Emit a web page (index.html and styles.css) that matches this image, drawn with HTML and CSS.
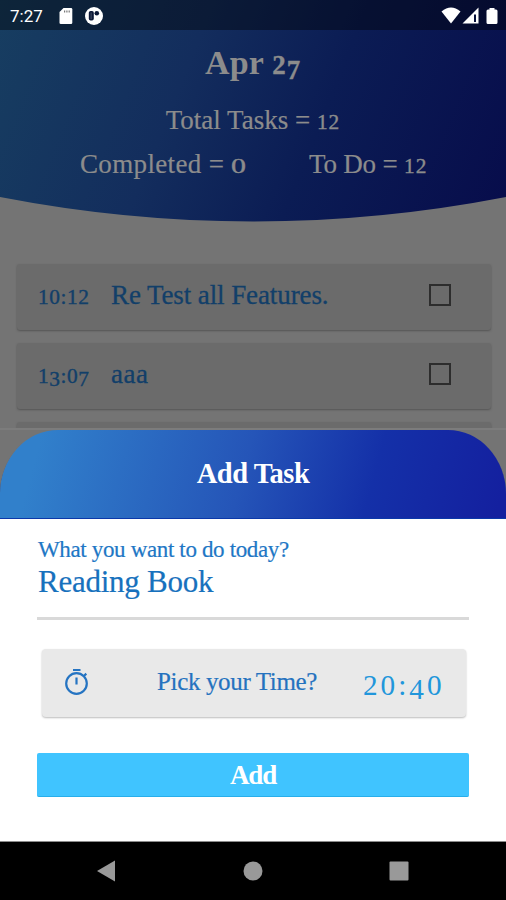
FILE: index.html
```html
<!DOCTYPE html>
<html lang="en">
<head>
<meta charset="utf-8">
<title>Add Task</title>
<link rel="stylesheet" href="styles.css">
</head>
<body>
<main class="screen">
  <section class="page">
    <header class="summary">
      <div class="status">
        <span class="clock">7:27</span>
        <svg class="sd" width="14" height="18" viewBox="0 0 14 18"><path d="M4.500 1H12a1.300 1.300 0 0 1 1.300 1.300v13.400A1.300 1.300 0 0 1 12 17H1.800A1.300 1.300 0 0 1 .5 15.700V5z" fill="#fff"/><path d="M5 3.400h1.200v2H5zM7.300 3.400h1.200v2H7.300zM9.600 3.400h1.200v2H9.600z" fill="#777"/></svg>
        <svg class="badge" width="18" height="18" viewBox="0 0 18 18"><circle cx="9" cy="9" r="9" fill="#fff"/><rect x="3.800" y="4" width="5" height="9.600" rx="1.800" fill="#0b1837"/><rect x="5.500" y="5.500" width="1.300" height="6.600" fill="#37435c"/><circle cx="11.800" cy="6.300" r="2.300" fill="#0b1837"/></svg>
        <span class="fill"></span>
        <svg width="20" height="17" viewBox="0 0 20 17"><path d="M.5 4.500Q10-3.600 19.500 4.500L10 16.500z" fill="#fff"/></svg>
        <svg class="signal" width="17" height="17" viewBox="0 0 17 17"><path d="M16.500.5V16.500H.5z" fill="#fff"/><path d="M12 7.500h2v7.500h-2z" fill="#07113a"/></svg>
        <svg class="battery" width="12" height="18" viewBox="0 0 12 18"><path d="M3.500 1h5v1.500H10q1.500 0 1.500 1.500v11.500q0 1.500-1.500 1.500H2Q.5 17 .5 15.500V4Q.5 2.500 2 2.500h1.500z" fill="#fff"/></svg>
      </div>
      <h1>Apr <span class="num">2<span class="low">7</span></span></h1>
      <p class="total">Total Tasks = <span class="num">12</span></p>
      <div class="counts"><p class="done">Completed = <span class="num zero">0</span></p><p class="todo">To Do = <span class="num">12</span></p></div>
    </header>
    <div class="list">
      <article class="task"><time><span class="num">10:12</span></time><span class="name">Re Test all Features.</span><span class="check"></span></article>
      <article class="task"><time><span class="num">1<span class="low">3</span>:0<span class="low">7</span></span></time><span class="name short">aaa</span><span class="check"></span></article>
      <article class="task"></article>
    </div>
  </section>
  <section class="sheet">
    <header class="sheet-head"><h2>Add Task</h2></header>
    <div class="form">
      <label class="question">What you want to do today?</label>
      <div class="field">Reading Book</div>
      <div class="picker">
        <svg class="timer" width="26" height="28" viewBox="0 0 26 28" fill="none" stroke="#2574c2" stroke-width="2.200"><circle cx="12.500" cy="15.500" r="10.300"/><path d="M9 2h7.500M12.500 9.500v7M19.700 8.200l2.600-2.600"/></svg>
        <span class="pick">Pick your Time?</span>
        <span class="chosen"><span class="num">20:<span class="low">4</span>0</span></span>
      </div>
      <button class="add" type="button">Add</button>
    </div>
  </section>
  <nav class="nav">
    <svg width="20" height="22" viewBox="0 0 20 22"><path d="M1 11L19 .5v21z" fill="#999"/></svg>
    <svg width="20" height="20" viewBox="0 0 20 20"><circle cx="10" cy="10" r="9.500" fill="#999"/></svg>
    <svg width="20" height="20" viewBox="0 0 20 20"><rect x=".5" y=".5" width="19" height="19" rx="1" fill="#999"/></svg>
  </nav>
</main>
</body>
</html>
```
FILE: styles.css
```css
* { box-sizing: border-box; }
body { margin: 0; font-family: "Liberation Serif", serif; }
h1, h2, p { margin: 0; }
svg { display: block; flex: none; }

.screen { width: 506px; height: 900px; display: flex; flex-direction: column; overflow: hidden; background: #747474; }
.page { height: 430px; overflow: hidden; border-bottom: 2px solid #7c7c7c; flex: none; }

.summary {
  height: 223px;
  color: #8c8c8c;
  background: linear-gradient(112deg, #173e61 0%, #132d5d 36%, #0b1c54 62%, #070c4b 100%);
  clip-path: path("M0 0H506V197Q253 246 0 197Z");
  text-align: center;
}
.status { height: 30px; display: flex; align-items: center; padding: 1px 8px 0 10px; background: rgba(0, 0, 0, .4); color: #fff; }
.clock { width: 49px; text-align: left; font: 400 17px Roboto, sans-serif; }
.badge { margin-left: 12px; }
.fill { flex: 1; }
.signal { margin-left: 1px; }
.battery { margin-left: 7px; }
h1 { font-size: 34px; line-height: 66px; height: 66px; letter-spacing: .2px; }
.total { height: 46px; line-height: 48px; font-size: 27px; -webkit-text-stroke: .2px; }
.counts { display: flex; height: 44px; line-height: 44px; font-size: 27px; -webkit-text-stroke: .2px; }
.done { width: 168px; margin-left: 80px; white-space: nowrap; text-align: left; letter-spacing: .35px; }
.todo { margin-left: 61px; white-space: nowrap; letter-spacing: -.2px; }

.num { font-size: .79em; letter-spacing: 1px; -webkit-text-stroke: .4px; }
.zero { display: inline-block; line-height: 1; transform: scaleX(1.4); transform-origin: left; }
.low { position: relative; top: .17em; }

.list { padding: 41px 15px 0 17px; display: flex; flex-direction: column; gap: 13px; }
.task { height: 66px; flex: none; display: flex; align-items: center; padding: 0 40px 4px 21px; border-radius: 3px; background: #6b6b6b; box-shadow: 0 1px 2px #545454; color: #123f69; font-size: 27px; -webkit-text-stroke: .3px; }
.task time { width: 73px; }
.task .num { letter-spacing: .6px; }
.name { flex: 1; white-space: nowrap; letter-spacing: -.1px; }
.short { letter-spacing: .5px; }
.check { width: 22px; height: 22px; border: 2px solid #2d2d2d; }

.sheet { height: 412px; flex: none; border-bottom: 1px solid #8c8c8c; }
.sheet-head { height: 89px; border-radius: 58px 58px 0 0 / 64px 64px 0 0; background: linear-gradient(105deg, #3180cb 8%, #2555b8 48%, #1430a8 73%, #14209f 98%); box-shadow: inset 0 -1px #0b38a9; color: #fff; text-align: center; }
h2 { font-size: 28.500px; line-height: 88px; letter-spacing: -.5px; }
.form { height: 322px; background: #fff; padding: 17px 37px 0; display: flex; flex-direction: column; }
.question { height: 27px; line-height: 27px; padding-left: 1px; font-size: 23px; letter-spacing: -.35px; color: #1e77c5; -webkit-text-stroke: .2px; }
.field { height: 57px; line-height: 38px; padding-left: 1px; border-bottom: 3px solid #d9d9d9; font-size: 31px; letter-spacing: -.25px; color: #1771bd; -webkit-text-stroke: .2px; }
.picker { height: 68px; margin: 29px 3px 0 5px; border-radius: 4px; background: #e9e9e9; box-shadow: 0 1px 2px #bcbcbc; display: flex; align-items: center; padding: 0 22px 2px; color: #2472bf; }
.pick { width: 160px; margin-left: 67px; font-size: 25px; letter-spacing: -.35px; white-space: nowrap; -webkit-text-stroke: .2px; }
.chosen { margin-left: 46px; font-size: 37px; color: #2196db; white-space: nowrap; }
.chosen .num { -webkit-text-stroke: 0; letter-spacing: 3px; }
.add { height: 44px; margin-top: 36px; border: 0; border-bottom: 1px solid #28aeea; border-radius: 2px; background: #40c4ff; color: #fff; font: bold 27px/42px "Liberation Serif", serif; letter-spacing: -1.200px; padding: 0; }

.nav { height: 58px; background: #000; display: flex; align-items: center; justify-content: space-between; padding: 0 97px 0 96px; }
```
